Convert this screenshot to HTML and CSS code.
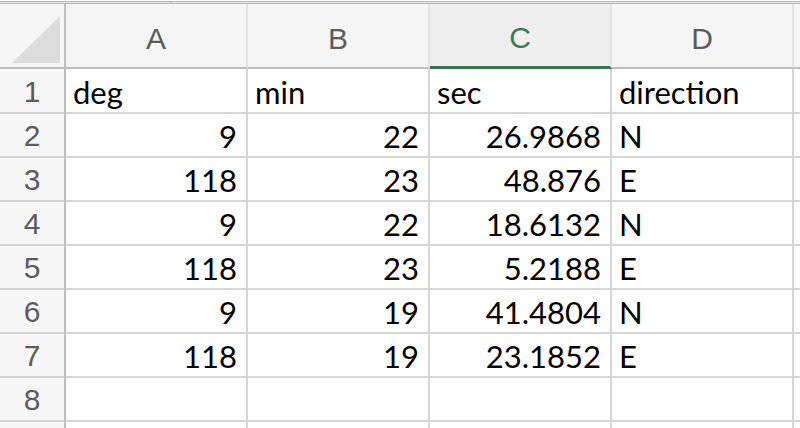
FILE: index.html
```html
<!DOCTYPE html>
<html>
<head>
<meta charset="utf-8">
<link rel="stylesheet" href="styles.css">
</head>
<body>
<div class="topstrip"><div class="topstrip-left"></div><div class="topstrip-right"></div></div>
<div class="sheet">
  <div class="corner"><svg class="corner-tri" width="66" height="65" viewBox="0 0 66 65"><polygon points="12,59 60,59 60,12" fill="#dcdcdc"/></svg></div>
  <div class="colhead">A</div>
  <div class="colhead">B</div>
  <div class="colhead selected">C</div>
  <div class="colhead">D</div>
  <div class="colhead edge"></div>

  <div class="rownum">1</div>
  <div class="cell">deg</div><div class="cell">min</div><div class="cell">sec</div><div class="cell">direction</div><div class="cell edge"></div>

  <div class="rownum">2</div>
  <div class="cell num">9</div><div class="cell num">22</div><div class="cell num">26.9868</div><div class="cell">N</div><div class="cell edge"></div>

  <div class="rownum">3</div>
  <div class="cell num">118</div><div class="cell num">23</div><div class="cell num">48.876</div><div class="cell">E</div><div class="cell edge"></div>

  <div class="rownum">4</div>
  <div class="cell num">9</div><div class="cell num">22</div><div class="cell num">18.6132</div><div class="cell">N</div><div class="cell edge"></div>

  <div class="rownum">5</div>
  <div class="cell num">118</div><div class="cell num">23</div><div class="cell num">5.2188</div><div class="cell">E</div><div class="cell edge"></div>

  <div class="rownum">6</div>
  <div class="cell num">9</div><div class="cell num">19</div><div class="cell num">41.4804</div><div class="cell">N</div><div class="cell edge"></div>

  <div class="rownum">7</div>
  <div class="cell num">118</div><div class="cell num">19</div><div class="cell num">23.1852</div><div class="cell">E</div><div class="cell edge"></div>

  <div class="rownum">8</div>
  <div class="cell"></div><div class="cell"></div><div class="cell"></div><div class="cell"></div><div class="cell edge"></div>

  <div class="rownum"></div>
  <div class="cell"></div><div class="cell"></div><div class="cell"></div><div class="cell"></div><div class="cell edge"></div>
</div>
</body>
</html>
```

FILE: styles.css
```css
* { box-sizing: border-box; }
html, body { margin: 0; padding: 0; background: #ffffff; overflow: hidden; }
body { width: 800px; height: 428px; }

.topstrip {
  height: 4px;
  display: flex;
  border-top: 1px solid #ffffff;
}
.topstrip-left {
  width: 171px;
  border-top: 1px solid #b9b9b9;
  border-bottom: 1px solid #b9b9b9;
  border-right: 1px solid #b9b9b9;
  background: #e4e4e4;
}
.topstrip-right {
  flex: 1;
  border-top: 1px solid #b9b9b9;
  border-bottom: 1px solid #b9b9b9;
  background: #e4e4e4;
}

.sheet {
  display: grid;
  grid-template-columns: 66px 182px 182px 182px 182px 1fr;
  grid-template-rows: 65px 45px repeat(7, 44px) 20px;
}

.corner {
  background: #f6f6f6;
  border-right: 2px solid #bdbdbd;
  border-bottom: 2px solid #bdbdbd;
  position: relative;
}
.corner-tri { display: block; }

.colhead {
  background: #f5f5f5;
  border-right: 2px solid #e2e2e2;
  border-bottom: 2px solid #bdbdbd;
  display: flex;
  align-items: center;
  justify-content: center;
  padding-top: 6px;
  font-family: "Liberation Sans", Arial, sans-serif;
  font-size: 30px;
  color: #5c5c5c;
}
.colhead.selected {
  background: #eeeeee;
  color: #3b7a4c;
  border-bottom: 3px solid #3a7449;
}
.colhead.edge { border-right: none; }

.rownum {
  background: #f7f7f7;
  border-right: 2px solid #bdbdbd;
  border-bottom: 2px solid #d2d2d2;
  display: flex;
  align-items: center;
  justify-content: center;
  font-family: "Liberation Sans", Arial, sans-serif;
  font-size: 30px;
  color: #5c5c5c;
  padding-top: 2px;
}

.cell {
  background: #ffffff;
  border-right: 2px solid #d6d6d6;
  border-bottom: 2px solid #d6d6d6;
  display: flex;
  align-items: center;
  padding: 2px 9px 0 7px;
  font-family: Lato, "Open Sans", sans-serif;
  font-size: 31px;
  color: #000000;
  white-space: nowrap;
}
.cell.num { justify-content: flex-end; }
.cell.edge { border-right: none; padding: 0; }
```
